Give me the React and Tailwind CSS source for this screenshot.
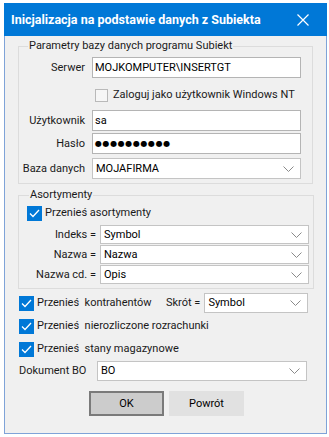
import React from 'react';

const FONT = "font-['Roboto',sans-serif]";

function Chevron() {
    return (
        <svg width="11" height="6" viewBox="0 0 11 6" className="shrink-0">
            <path d="M0.5 0.5 L5.5 5.5 L10.5 0.5" fill="none" stroke="#8a8a8a" strokeWidth="1" />
        </svg>
    );
}

function Check({ checked }) {
    if (!checked) {
        return <div className="w-[13px] h-[13px] shrink-0 border border-[#b9b9b9] bg-[#f6f6f6]" />;
    }
    return (
        <div className="w-[15px] h-[15px] shrink-0 bg-[#0078d7] flex items-center justify-center">
            <svg width="11" height="9" viewBox="0 0 11 9">
                <path d="M1 4.5 L4 7.5 L10 1" fill="none" stroke="#fff" strokeWidth="1.3" />
            </svg>
        </div>
    );
}

function Field({ value, className = '' }) {
    return (
        <div className={`h-[21px] border border-[#b4b4b4] bg-white flex items-center pl-[2px] text-black ${className}`}>
            {value}
        </div>
    );
}

function Select({ value, className = '' }) {
    return (
        <div className={`border border-[#c4c4c4] bg-white flex items-center justify-between pl-[3px] pr-[6px] text-black ${className}`}>
            <span>{value}</span>
            <Chevron />
        </div>
    );
}

export default function App() {
    return (
        <div className={`w-[329px] h-[437px] bg-white pt-[3px] pl-[4px] text-[11px] leading-[16px] text-[#1a1a1a] whitespace-nowrap ${FONT}`}>
            <div className="w-[323px] h-[431px] flex flex-col">
                {/* Title bar */}
                <div className="h-[33px] bg-[#0078d7] flex items-center justify-between pl-[7px] pr-[18px] text-white font-bold text-[12.5px]">
                    <span className="pt-[1px]">Inicjalizacja na podstawie danych z Subiekta</span>
                    <svg width="12" height="12" viewBox="0 0 12 12">
                        <path d="M0.5 0.5 L11.5 11.5 M11.5 0.5 L0.5 11.5" stroke="#fff" strokeWidth="1.2" />
                    </svg>
                </div>

                <div className="flex-1 bg-[#f0f0f0] border-x border-b border-[#7fa3d8] flex flex-col">
                    {/* Parametry */}
                    <fieldset className="ml-[13px] mt-[2px] w-[295px] h-[146px] border border-[#dcdcdc]">
                        <legend className="ml-[9px] px-[1px]">Parametry bazy danych programu Subiekt</legend>
                        <div className="flex items-center mt-[3px]">
                            <span className="w-[66px] text-right">Serwer</span>
                            <Field value="MOJKOMPUTER\INSERTGT" className="ml-[7px] w-[209px]" />
                        </div>
                        <div className="flex items-center mt-[9px] ml-[76px] gap-[5px]">
                            <Check checked={false} />
                            <span>Zaloguj jako użytkownik Windows NT</span>
                        </div>
                        <div className="flex items-center mt-[7px]">
                            <span className="w-[66px] text-right">Użytkownik</span>
                            <Field value="sa" className="ml-[7px] w-[209px]" />
                        </div>
                        <div className="flex items-center mt-[2px]">
                            <span className="w-[66px] text-right">Hasło</span>
                            <Field value="●●●●●●●●●●" className="ml-[7px] w-[209px] font-['DejaVu_Sans',sans-serif] text-[8px] tracking-[0.6px]" />
                        </div>
                        <div className="flex items-center mt-[4px]">
                            <span className="w-[66px] text-right">Baza danych</span>
                            <Select value="MOJAFIRMA" className="ml-[7px] w-[209px] h-[21px]" />
                        </div>
                    </fieldset>

                    {/* Asortymenty */}
                    <fieldset className="ml-[13px] mt-[3px] w-[296px] h-[102px] border border-[#dcdcdc]">
                        <legend className="ml-[10px] px-[1px]">Asortymenty</legend>
                        <div className="flex items-center ml-[8px] mt-[2px] gap-[3px]">
                            <Check checked />
                            <span>Przenieś asortymenty</span>
                        </div>
                        <div className="flex flex-col gap-[1px] mt-[4px]">
                            {[['Indeks =', 'Symbol'], ['Nazwa =', 'Nazwa'], ['Nazwa cd. =', 'Opis']].map(([l, v]) => (
                                <div key={l} className="flex items-center">
                                    <span className="w-[77px] text-right">{l}</span>
                                    <Select value={v} className="ml-[4px] w-[209px] h-[19px]" />
                                </div>
                            ))}
                        </div>
                    </fieldset>

                    {/* Options */}
                    <div className="flex items-center ml-[14px] mt-[4px] h-[20px]">
                        <Check checked />
                        <span className="ml-[3px] w-[129px] whitespace-pre">Przenieś  kontrahentów</span>
                        <span className="whitespace-pre">Skrót =</span>
                        <Select value="Symbol" className="ml-[4px] w-[104px] h-[20px]" />
                    </div>
                    <div className="flex items-center ml-[14px] mt-[5px] h-[16px]">
                        <Check checked />
                        <span className="ml-[3px] whitespace-pre">Przenieś  nierozliczone rozrachunki</span>
                    </div>
                    <div className="flex items-center ml-[14px] mt-[7px] h-[16px]">
                        <Check checked />
                        <span className="ml-[3px] whitespace-pre">Przenieś  stany magazynowe</span>
                    </div>
                    <div className="flex items-center ml-[14px] mt-[4px]">
                        <span className="w-[78px]">Dokument BO</span>
                        <Select value="BO" className="w-[210px] h-[20px]" />
                    </div>

                    {/* Buttons */}
                    <div className="flex ml-[84px] mt-[10px] gap-[5px]">
                        <button className="w-[75px] h-[25px] border-2 border-[#7a7a7a] bg-[#cccccc] text-black">OK</button>
                        <button className="w-[75px] h-[25px] bg-[#e1e1e1] text-black">Powrót</button>
                    </div>
                </div>
            </div>
        </div>
    );
}
